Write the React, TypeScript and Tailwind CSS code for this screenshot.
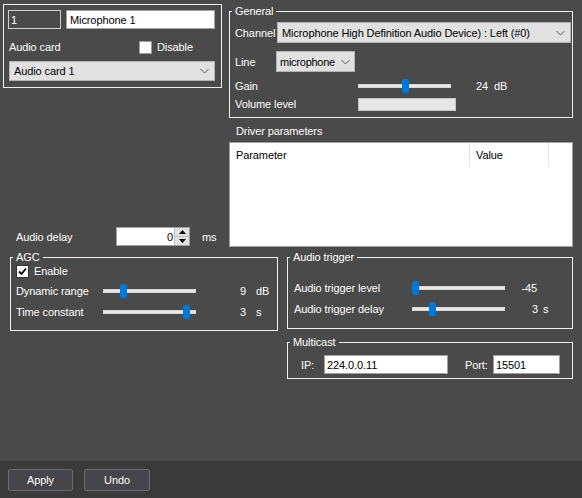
import React from "react";

function Chevron() {
  return (
    <svg width="9" height="6" viewBox="0 0 9 6" className="shrink-0">
      <path d="M0.5 1 L4.5 5 L8.5 1" fill="none" stroke="#5a5a5a" strokeWidth="1" />
    </svg>
  );
}

function Combo({ text, className }: { text: string; className: string }) {
  return (
    <div
      className={
        "flex items-center justify-between bg-[#e1e1e1] border border-[#b4b4b4] text-black " +
        className
      }
    >
      <span className="whitespace-nowrap">{text}</span>
      <Chevron />
    </div>
  );
}

function Slider({ pos, w }: { pos: number; w: string }) {
  return (
    <div className={"relative flex h-[14px] shrink-0 items-center " + w}>
      <div className="h-[4px] w-full bg-[#e7e7e7] border border-[#d9d9d9]" />
      <div
        className="absolute top-0 h-[14px] w-[7px] rounded-[2px] bg-[#0078d7]"
        style={{ left: pos }}
      />
    </div>
  );
}

function Check({ checked }: { checked?: boolean }) {
  return (
    <div className="flex h-[13px] w-[13px] shrink-0 items-center justify-center border border-[#333333] bg-white">
      {checked && (
        <svg width="9" height="9" viewBox="0 0 9 9">
          <path d="M1 4.5 L3.5 7 L8 1.5" fill="none" stroke="#000" strokeWidth="1.8" />
        </svg>
      )}
    </div>
  );
}

function Legend({ children }: { children: React.ReactNode }) {
  return <legend className="ml-[2px] px-[3px] leading-[14px]">{children}</legend>;
}

export default function App() {
  return (
    <div className="flex h-[498px] w-[582px] flex-col overflow-hidden bg-[#4a4a4a] font-['Liberation_Sans',Arial,sans-serif] text-[11px] leading-[14px] tracking-[-0.1px] text-white">
      <div className="flex flex-1 flex-col pt-[4px]">
        {/* Row 1 */}
        <div className="flex h-[243px]">
          {/* Left column */}
          <div className="ml-[3px] flex w-[219px] flex-col">
            <div className="h-[84px] border border-[#f0f0f0] pl-[4px] pt-[5px]">
              <div className="flex gap-[5px]">
                <div className="flex h-[19px] w-[53px] items-center border border-[#d0d0d0] bg-[#4a4a4a] pl-[2px]">
                  1
                </div>
                <div className="flex h-[19px] w-[149px] items-center border border-[#a0a0a0] bg-white pl-[3px] text-black">
                  Microphone 1
                </div>
              </div>
              <div className="mt-[11px] flex h-[14px] items-center pl-[1px]">
                <span className="w-[130px]">Audio card</span>
                <div className="flex h-[13px] w-[13px] shrink-0 border border-[#9a9a9a] bg-white" />
                <span className="ml-[5px]">Disable</span>
              </div>
              <Combo text="Audio card 1" className="ml-[1px] mt-[7px] h-[20px] w-[206px] pl-[4px] pr-[5px]" />
            </div>
            <div className="mt-auto mb-[1px] flex h-[19px] items-center pl-[13px]">
              <span className="w-[100px]">Audio delay</span>
              <div className="flex h-[19px] w-[74px] border border-[#a0a0a0] bg-white text-black">
                <div className="flex flex-1 items-center justify-end pr-[1px]">0</div>
                <div className="flex w-[15px] flex-col border-l border-[#c0c0c0] bg-[#e1e1e1]">
                  <div className="flex flex-1 items-center justify-center border-b border-[#c0c0c0]">
                    <svg width="7" height="4" viewBox="0 0 7 4">
                      <path d="M0 4 L3.5 0 L7 4 Z" fill="#000" />
                    </svg>
                  </div>
                  <div className="flex flex-1 items-center justify-center">
                    <svg width="7" height="4" viewBox="0 0 7 4">
                      <path d="M0 0 L3.5 4 L7 0 Z" fill="#000" />
                    </svg>
                  </div>
                </div>
              </div>
              <span className="ml-[12px]">ms</span>
            </div>
          </div>

          {/* Right column */}
          <div className="ml-[7px] flex w-[344px] flex-col">
            <fieldset className="border border-[#f0f0f0]">
              <Legend>General</Legend>
              <div className="pb-[6px] pl-[5px]">
                <div className="mt-[4px] flex items-center">
                  <span className="w-[42px]">Channel</span>
                  <Combo
                    text="Microphone High Definition Audio Device) : Left (#0)"
                    className="h-[21px] w-[294px] pl-[4px] pr-[5px]"
                  />
                </div>
                <div className="mt-[8px] flex items-center">
                  <span className="w-[41px]">Line</span>
                  <Combo text="microphone" className="h-[21px] w-[79px] pl-[3px] pr-[4px] tracking-[-0.25px]" />
                </div>
                <div className="mt-[7px] flex items-center">
                  <span className="w-[123px]">Gain</span>
                  <Slider pos={44} w="w-[93px]" />
                  <span className="ml-[25px]">24</span>
                  <span className="ml-[6px]">dB</span>
                </div>
                <div className="mt-[4px] flex items-center">
                  <span className="w-[123px]">Volume level</span>
                  <div className="h-[13px] w-[98px] border border-[#c4c4c4] bg-[#e6e6e6]" />
                </div>
              </div>
            </fieldset>
            <div className="mt-[6px] pl-[7px]">Driver parameters</div>
            <div className="mt-[4px] flex h-[105px] items-start border border-[#a0a0a0] bg-white text-black">
              <div className="flex h-[24px] w-[240px] items-center border-r border-[#e3e3e3] pl-[6px]">
                Parameter
              </div>
              <div className="flex h-[24px] w-[79px] items-center border-r border-[#e3e3e3] pl-[6px]">
                Value
              </div>
            </div>
          </div>
        </div>

        {/* Row 2 */}
        <div className="mt-[3px] flex items-start">
          <fieldset className="ml-[10px] w-[268px] border border-[#f0f0f0]">
            <Legend>AGC</Legend>
            <div className="pb-[11px] pl-[5px]">
              <div className="flex h-[14px] items-center">
                <Check checked />
                <span className="ml-[5px]">Enable</span>
              </div>
              <div className="mt-[6px] flex items-center">
                <span className="w-[87px]">Dynamic range</span>
                <Slider pos={17} w="w-[93px]" />
                <span className="w-[50px] text-right">9</span>
                <span className="ml-[10px]">dB</span>
              </div>
              <div className="mt-[7px] flex items-center">
                <span className="w-[87px]">Time constant</span>
                <Slider pos={80} w="w-[93px]" />
                <span className="w-[50px] text-right">3</span>
                <span className="ml-[10px]">s</span>
              </div>
            </div>
          </fieldset>

          <div className="ml-[9px] flex w-[286px] flex-col">
            <fieldset className="border border-[#f0f0f0]">
              <Legend>Audio trigger</Legend>
              <div className="pb-[12px] pl-[6px]">
                <div className="mt-[17px] flex items-center">
                  <span className="w-[118px]">Audio trigger level</span>
                  <Slider pos={0} w="w-[93px]" />
                  <span className="w-[32px] text-right">-45</span>
                </div>
                <div className="mt-[7px] flex items-center">
                  <span className="w-[118px]">Audio trigger delay</span>
                  <Slider pos={17} w="w-[93px]" />
                  <span className="w-[33px] text-right">3</span>
                  <span className="ml-[5px]">s</span>
                </div>
              </div>
            </fieldset>
            <fieldset className="mt-[6px] border border-[#f0f0f0]">
              <Legend>Multicast</Legend>
              <div className="pb-[4px] pl-[13px]">
                <div className="mt-[6px] flex items-center">
                  <span className="w-[23px]">IP:</span>
                  <div className="flex h-[19px] w-[124px] items-center border border-[#a0a0a0] bg-white pl-[2px] text-black">
                    224.0.0.11
                  </div>
                  <span className="ml-[17px] w-[28px]">Port:</span>
                  <div className="flex h-[19px] w-[67px] items-center border border-[#a0a0a0] bg-white pl-[2px] text-black">
                    15501
                  </div>
                </div>
              </div>
            </fieldset>
          </div>
        </div>
      </div>

      {/* Bottom bar */}
      <div className="flex h-[37px] shrink-0 items-start gap-[11px] bg-[#3a3a3a] pl-[8px] pt-[8px]">
        <button className="flex h-[22px] w-[65px] items-center justify-center rounded-[2px] border border-[#6c6c6c] bg-[#45454a] text-white">
          Apply
        </button>
        <button className="flex h-[22px] w-[66px] items-center justify-center rounded-[2px] border border-[#6c6c6c] bg-[#45454a] text-white">
          Undo
        </button>
      </div>
    </div>
  );
}
